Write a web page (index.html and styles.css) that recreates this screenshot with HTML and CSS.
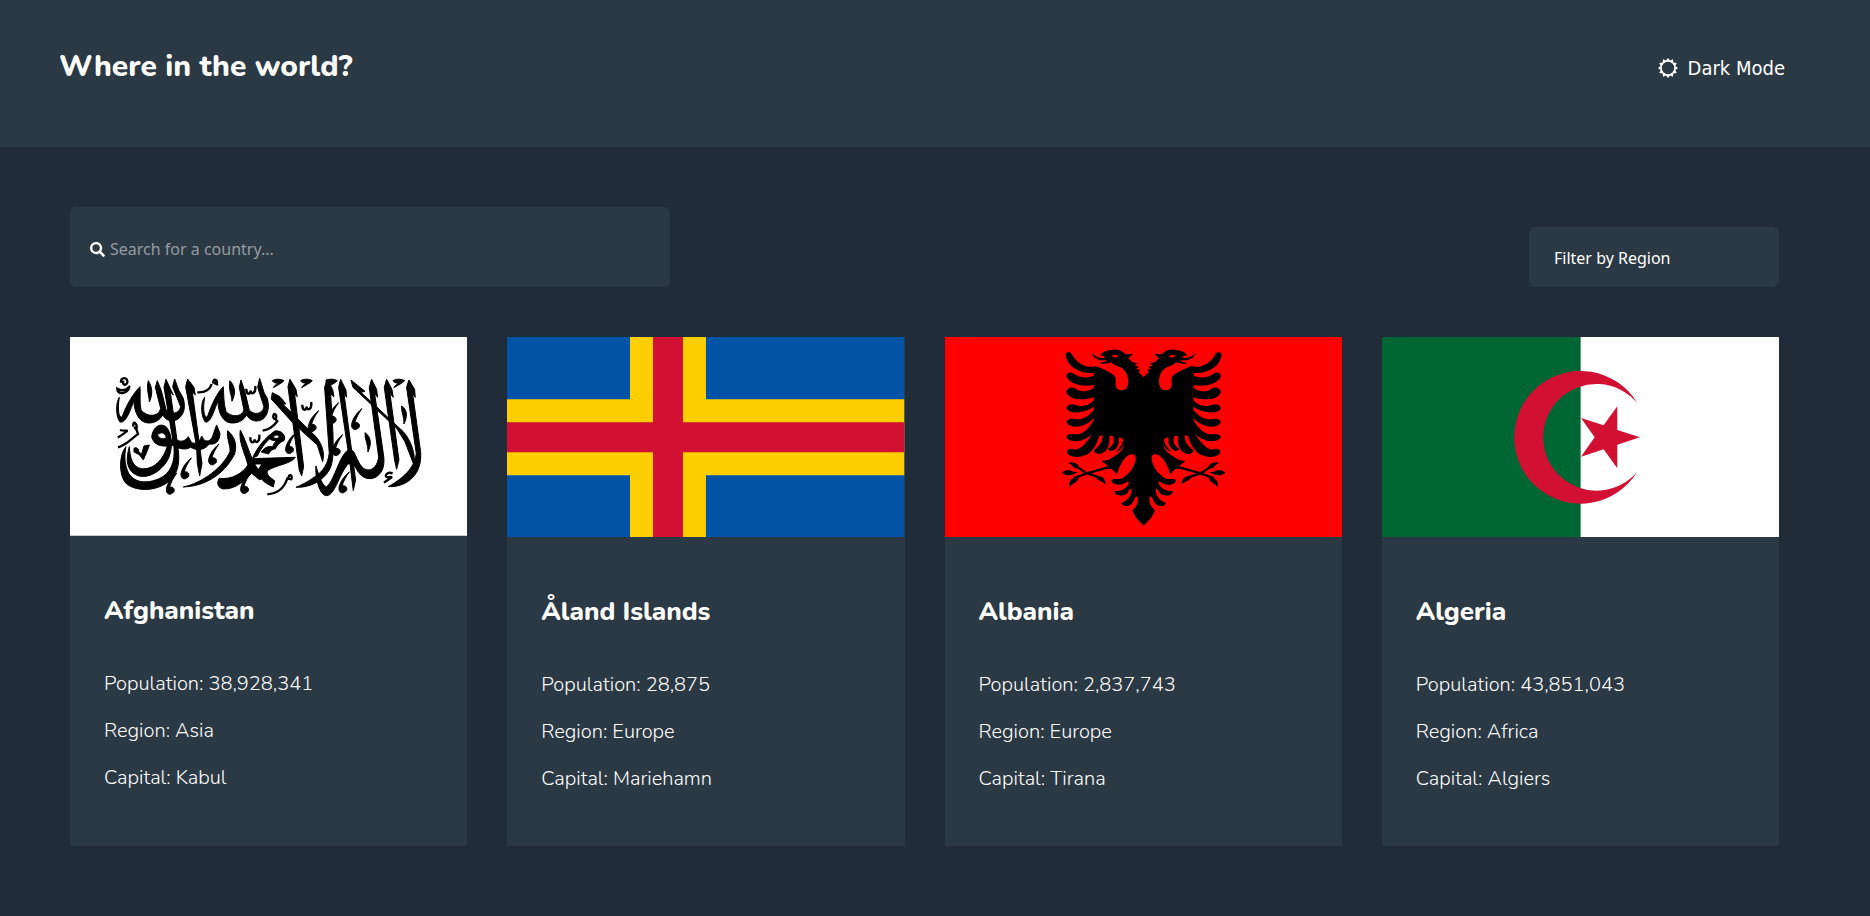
FILE: index.html
```html
<!DOCTYPE html>
<html lang="en">
<head>
<meta charset="utf-8">
<title>Where in the world?</title>
<meta name="viewport" content="width=device-width, initial-scale=1">
<link rel="stylesheet" href="styles.css">
</head>
<body>
<header class="site-header">
  <h1 class="site-title">Where in the world?</h1>
  <button class="theme-toggle" type="button">
    <svg class="theme-icon" viewBox="-10 -10 20 20" aria-hidden="true"><path fill="currentColor" fill-rule="evenodd" d="M0-10 2-7.400 5-8.700 5.400-5.400 8.700-5 7.400-2 10 0 7.400 2 8.700 5 5.400 5.400 5 8.700 2 7.400 0 10-2 7.400-5 8.700-5.400 5.400-8.700 5-7.400 2-10 0-7.400-2-8.700-5-5.400-5.400-5-8.700-2-7.400zM-6.200 0a6.200 6.200 0 1 0 12.400 0a6.200 6.200 0 1 0-12.400 0z"/></svg>
    Dark Mode
  </button>
</header>
<main class="content">
  <form class="controls">
    <label class="search">
      <svg class="search-icon" viewBox="0 0 512 512" role="img" aria-label="Search"><path fill="currentColor" d="M505 442.700 405.300 343c-4.500-4.500-10.600-7-17-7H372c27.600-35.300 44-79.700 44-128C416 93.100 322.900 0 208 0S0 93.100 0 208s93.100 208 208 208c48.300 0 92.700-16.400 128-44v16.300c0 6.400 2.500 12.500 7 17l99.700 99.700c9.400 9.400 24.600 9.400 33.900 0l28.300-28.300c9.400-9.400 9.400-24.600.1-34zM208 336c-70.700 0-128-57.200-128-128 0-70.700 57.200-128 128-128 70.700 0 128 57.200 128 128 0 70.700-57.200 128-128 128z"/></svg>
      <input class="search-input" type="text" placeholder="Search for a country...">
    </label>
    <select class="region-filter" aria-label="Filter by Region">
      <option>Filter by Region</option>
      <option>Africa</option>
      <option>Asia</option>
      <option>Europe</option>
    </select>
  </form>
  <section class="countries">
    <article class="card">
      <svg class="flag" viewBox="0 0 1192 596" role="img" aria-label="Flag of Afghanistan">
        <defs>
          <path id="comma" d="M18-48C2-35-10-18-13 0C-14 14-2 18 4 12C14 8 12-4 4-6C0-8-3-6-4-4C0-20 8-34 18-48z"/>
          <path id="hat" d="M-18-6C-10-12 8-12 17-6C10 2-4 8-15 15C-12 8-4 5-2 1C-8 2-14 0-18-6z"/>
          <path id="shadda" d="M-15-6C-15 12-4 14-2 0C0 14 14 10 12-14" fill="none" stroke="#000" stroke-width="7"/>
        </defs>
        <path fill="#fff" d="M0 0h1192v596H0z"/>
        <g transform="translate(-30 -21)" stroke="#000" stroke-width="3">
          <path d="M690 148 684 170 718 420 725 438 731 410 704 192 712 200 708 178Z"/>
          <path d="M801 148 794 172 808 370C804 400 790 425 765 440C745 455 725 465 708 472C750 474 790 452 808 420C824 392 822 340 812 192L822 200 818 178Z"/>
          <path d="M842 148 836 172 870 400 880 482 887 450 852 190 860 202 858 180Z"/>
          <path d="M637 188 634 207 700 280 772 345 788 395C795 370 787 345 770 322L668 222 678 222 660 200Z"/>
          <path d="M873 150 879 172 1010 295 1035 335 1062 405C1068 370 1052 330 1030 305L903 187 915 184Z"/>
          <path d="M935 148 928 172 956 380C954 405 940 420 925 420C905 420 895 395 884 370C872 348 858 360 843 388C828 420 812 465 800 470C788 470 778 440 768 408C765 440 778 497 800 497C825 495 835 440 860 408C868 395 880 400 890 418C905 447 930 452 950 440C972 425 975 400 970 370L944 190 953 202 950 178Z"/>
          <path d="M980 148 973 172 1004 390 1010 418 1017 390 990 190 1000 202 996 178Z"/>
          <path d="M1047 150 1040 172 1069 370C1066 405 1040 440 985 470C1045 472 1088 430 1082 365L1058 190 1066 202 1064 178Z"/>
          <path d="M383 147 377 170 410 350 412 400 419 438 426 400 397 185 406 195 402 172Z"/>
          <path d="M318 148 312 172 342 350C346 400 330 430 300 445C262 462 225 460 206 430C194 405 192 380 198 350C176 375 176 440 200 462C235 488 295 482 330 452C358 425 360 390 353 345L331 185 340 195Z"/>
          <path d="M275 320C280 290 300 278 318 290C338 310 340 360 322 392C295 435 245 455 215 425C200 408 198 385 208 350C210 385 218 412 245 416C280 420 310 390 322 348C305 350 280 345 275 320zM292 315C300 330 314 328 319 322C314 308 303 304 292 315z" fill-rule="evenodd"/>
          <path d="M340 320C355 340 375 336 385 320L395 338C405 342 418 340 425 318L432 330C444 338 456 330 460 312L470 285 480 310C480 335 465 345 448 342C430 365 405 360 392 352C370 365 345 350 330 342z"/>
          <path d="M292 152 286 172 302 235C296 262 262 262 243 240C238 215 242 195 240 170C222 188 200 222 186 262C176 262 172 240 178 202C166 220 168 262 180 276C196 280 208 250 222 212C222 250 240 278 264 279C284 280 300 270 308 255C320 276 345 278 360 262C374 248 376 230 370 205L356 180 344 147 338 170 362 230C358 254 330 254 318 238L304 182z"/>
          <path d="M543 150 538 172 552 240C545 262 515 262 498 245C490 215 492 195 490 170C472 188 455 222 442 262C432 262 428 240 434 202C420 220 424 262 436 276C450 280 460 250 474 212C474 250 490 278 514 279C534 280 550 272 560 255C572 276 595 278 612 265C626 248 628 230 622 205L613 190 599 145 593 172 612 230C608 254 580 256 568 240L554 182z"/>
          <path d="M265 152C276 170 280 190 268 216C268 195 258 180 265 152zM510 152C526 170 528 190 516 214C516 195 504 180 510 152zM1025 228C1044 240 1042 262 1032 282C1034 262 1024 250 1025 228zM915 308C936 322 934 345 924 366C926 345 914 330 915 308z"/>
          <path d="M503 302C525 320 532 345 524 372C500 420 450 468 370 471C430 458 490 410 510 365C512 345 500 330 503 302z"/>
          <path d="M541 300C555 325 565 360 578 390C590 415 600 425 610 436L600 450C592 444 584 438 575 430C555 450 530 478 490 477C475 474 468 462 478 445C515 450 548 430 564 405C555 370 535 335 541 300z"/>
          <path d="M578 386 706 382C694 402 650 404 622 422C618 436 636 446 644 452L640 471C612 458 598 446 592 424L606 402 580 402z"/>
          <path d="M578 384C592 352 616 322 645 303C665 300 680 318 672 332C660 336 652 346 646 356L638 350C642 340 646 334 652 330C640 334 632 330 630 326C614 338 602 358 592 378zM640 322C648 328 656 326 658 318C650 313 644 315 640 322zM604 366C614 350 634 344 646 356C638 358 630 362 626 372z" fill-rule="evenodd"/>
          <path d="M222 355C230 350 238 358 236 366L245 372 252 348 268 345 262 362 250 390 238 374 222 366z"/>
          <g fill="none" stroke="#000" stroke-width="7">
            <path d="M183 158C180 140 205 140 202 158C198 168 186 166 190 152M210 168C198 182 186 185 172 176C172 192 196 196 208 174"/>
            <path d="M460 160C458 142 476 150 470 162C455 160 470 150 472 166M455 162C450 180 435 188 412 187"/>
            <path d="M220 290C218 268 232 280 230 296C220 296 225 282 234 312C215 325 200 345 174 352M180 300C190 304 205 300 200 304C190 312 182 318 173 322"/>
            <path d="M640 264C638 246 652 250 648 266C638 270 640 256 652 274C640 290 625 300 608 302"/>
            <path d="M686 446C684 430 700 434 694 448L682 446C670 480 650 490 622 493M998 430C980 424 972 440 982 442C1000 440 1000 440 972 458"/>
          </g>
          <use href="#comma" x="758" y="290"/><use href="#comma" x="818" y="266"/><use href="#comma" x="888" y="284"/>
          <use href="#comma" x="690" y="356"/><use href="#comma" x="830" y="362"/><use href="#comma" x="459" y="390"/>
          <use href="#comma" x="376" y="432"/><use href="#comma" x="332" y="478"/><use href="#comma" x="555" y="476"/>
          <use href="#comma" x="850" y="474"/>
          <use href="#hat" x="655" y="158"/><use href="#hat" x="740" y="158"/><use href="#hat" x="815" y="158"/><use href="#hat" x="1017" y="158"/>
          <use href="#shadda" x="742" y="230"/><use href="#shadda" x="574" y="182"/><use href="#shadda" x="586" y="328"/>
        </g>
      </svg>
      <div class="card-body">
        <h2 class="card-title">Afghanistan</h2>
        <p class="fact">Population: 38,928,341</p>
        <p class="fact">Region: Asia</p>
        <p class="fact">Capital: Kabul</p>
      </div>
    </article>
    <article class="card">
      <svg class="flag" viewBox="0 0 1192 600" role="img" aria-label="Flag of Åland Islands">
        <path fill="#0053a5" d="M0 0h1192v600H0z"/>
        <path fill="#ffce00" d="M369 0h228v187h595v228H597v185H369V415H0V187h369z"/>
        <path fill="#d21034" d="M438 0h90v256h664v90H528v254h-90V346H0v-90h438z"/>
      </svg>
      <div class="card-body">
        <h2 class="card-title">Åland Islands</h2>
        <p class="fact">Population: 28,875</p>
        <p class="fact">Region: Europe</p>
        <p class="fact">Capital: Mariehamn</p>
      </div>
    </article>
    <article class="card">
      <svg class="flag" viewBox="0 0 1192 600" role="img" aria-label="Flag of Albania">
        <defs>
          <g id="eagle-half">
            <path d="M281 126 266 112 270 104 258 102 267 95 254 92 263 84 247 82 235 70 249 57 226 58C216 46 200 40 180 46C168 47 155 52 150 62C155 60 162 62 165 66C158 72 140 70 126 54C126 64 140 74 152 76L172 76C166 82 156 82 150 84C160 90 176 84 184 82C190 90 200 92 214 98C230 108 238 130 234 150C230 166 214 170 202 162C192 152 200 138 196 126C186 112 160 104 138 93C132 92 130 96 131 102L132 292C140 304 150 306 158 300C158 318 150 332 132 346C132 356 146 360 158 354C174 346 180 328 178 304C184 302 188 302 190 306C194 322 190 330 174 342C178 350 188 350 196 342C206 334 208 320 206 308C210 306 214 308 220 312C218 330 206 342 198 350C206 350 216 342 222 328C222 346 200 362 176 374L155 378 176 394 160 400 186 402 201 418C206 400 220 362 246 357C262 358 260 380 246 402C240 412 228 420 218 430C204 436 192 428 184 436C186 448 202 452 218 448C228 444 232 438 236 440C238 456 216 470 194 468C192 480 210 486 224 480C236 476 236 462 244 460C248 476 236 496 214 504C218 516 236 516 246 506C254 498 252 486 262 484C268 500 260 514 247 526C252 544 268 560 281 572z"/>
            <path d="M136 94C112 100 84 88 68 62C62 48 50 48 47 60C50 88 80 116 132 114zM132 122C104 132 88 126 74 118C62 108 50 114 49 124C56 144 90 158 134 150zM132 158C110 172 92 172 78 162C68 152 50 160 49 170C54 192 92 200 134 186zM132 196C112 216 92 216 76 210C62 204 48 212 50 222C60 238 104 236 134 214zM132 224C112 248 94 256 74 252C60 248 48 256 50 264C64 284 112 278 136 244zM132 254C116 282 96 300 74 298C60 294 48 300 50 308C64 326 116 326 142 274zM134 282C114 320 96 340 76 344C62 338 50 344 51 352C58 374 112 368 126 346C138 334 144 316 150 296z"/>
            <path d="M184 394 108 416 70 430M160 432 108 414 76 392" fill="none" stroke="#000" stroke-width="7"/>
            <path d="M36 414C44 404 56 402 70 410L84 412 70 418C58 424 48 420 36 414zM54 384C66 380 76 382 84 390L88 400 76 400C68 398 68 388 54 384zM58 458C56 444 60 432 74 430L86 430C84 442 66 444 58 458zM168 450C166 440 166 430 152 425L138 426C142 440 162 438 168 450z"/>
            <path fill="#f00" d="M186 62C192 57 202 59 205 65C198 70 190 68 186 62z"/>
          </g>
        </defs>
        <path fill="#f00" d="M0 0h1192v600H0z"/>
        <g transform="translate(315 -6)">
          <use href="#eagle-half"/>
          <use href="#eagle-half" transform="matrix(-1 0 0 1 562 0)"/>
          <path d="M278 128h6v438h-6z"/>
        </g>
      </svg>
      <div class="card-body">
        <h2 class="card-title">Albania</h2>
        <p class="fact">Population: 2,837,743</p>
        <p class="fact">Region: Europe</p>
        <p class="fact">Capital: Tirana</p>
      </div>
    </article>
    <article class="card">
      <svg class="flag" viewBox="0 0 1192 600" role="img" aria-label="Flag of Algeria">
        <path fill="#fff" d="M0 0h1192v600H0z"/>
        <path fill="#063" d="M0 0h596v600H0z"/>
        <path fill="#d21034" d="M766 198A199 199 0 1 0 766 404A160 160 0 1 1 766 198zM774 301 706 279V208L665 265 597 243 638 301 597 359 665 337 706 394V323z"/>
      </svg>
      <div class="card-body">
        <h2 class="card-title">Algeria</h2>
        <p class="fact">Population: 43,851,043</p>
        <p class="fact">Region: Africa</p>
        <p class="fact">Capital: Algiers</p>
      </div>
    </article>
  </section>
</main>
</body>
</html>
```
FILE: styles.css
```css
* {
  box-sizing: border-box;
}

body {
  margin: 0;
  background: #202c37;
  color: #fff;
  font-family: Nunito, Lato, sans-serif;
}

.site-header {
  display: flex;
  justify-content: space-between;
  align-items: center;
  padding: 46px 85px 59px 59px;
  background: #2b3945;
}

.site-title {
  margin: 0;
  font-size: 30px;
  font-weight: 800;
  line-height: 42px;
}

.theme-toggle {
  display: flex;
  align-items: center;
  gap: 10px;
  padding: 2px 0 0;
  border: 0;
  background: none;
  color: inherit;
  font-family: "DejaVu Sans Condensed", sans-serif;
  font-size: 20px;
  cursor: pointer;
}

.theme-icon {
  width: 20px;
  height: 20px;
}

.content {
  padding: 60px 91px 70px 70px;
}

.controls {
  display: flex;
  justify-content: space-between;
  align-items: flex-end;
  margin-bottom: 50px;
}

.search {
  display: flex;
  align-items: center;
  gap: 5px;
  width: 600px;
  height: 80px;
  padding: 4px 20px 0;
  border-radius: 6px;
  background: #2b3945;
}

.search-icon {
  width: 15px;
  height: 15px;
}

.search-input {
  flex: 1;
  padding: 0;
  border: 0;
  outline: 0;
  background: none;
  color: inherit;
  font-family: "Noto Sans", sans-serif;
  font-size: 16px;
}

.search-input::placeholder {
  color: #949ca2;
}

.region-filter {
  appearance: none;
  width: 250px;
  height: 60px;
  padding: 2px 25px 0;
  border: 0;
  border-radius: 6px;
  background: #2b3945;
  color: inherit;
  font-family: "Noto Sans", sans-serif;
  font-size: 16px;
}

.countries {
  display: grid;
  grid-template-columns: repeat(4, 1fr);
  gap: 40px;
}

.card {
  background: #2b3945;
}

.flag {
  display: block;
  width: 100%;
  height: auto;
}

.card-body {
  padding: 57px 34px 54px;
}

.card-title {
  margin: 0 0 41px;
  font-size: 26px;
  font-weight: 800;
  line-height: 36px;
}

.fact {
  margin: 0 0 20px;
  font-size: 20px;
  font-weight: 300;
  line-height: 27px;
}

.fact:last-child {
  margin-bottom: 0;
}
```
